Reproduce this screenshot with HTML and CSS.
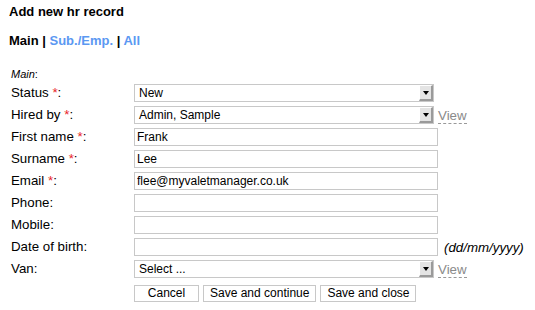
FILE: index.html
```html
<!DOCTYPE html>
<html lang="en">
<head>
<meta charset="UTF-8" />
<title>Add new hr record</title>
<link rel="stylesheet" href="styles.css">
</head>
<body>

<!-- Header -->
<h2 class="pageTitle">Add new hr record</h2>
<div class="tabs">
  <span class="tab current">Main</span> |
  <a class="tab" href="#">Sub./Emp.</a> |
  <a class="tab" href="#">All</a>
</div>

<!-- Form -->
<form class="hrForm" onsubmit="return false">
  <div class="section"><i>Main</i>:</div>

  <div class="row">
    <label class="label">Status <span class="req">*</span>:</label>
    <div class="select"><span class="selText">New</span><span class="arrow"></span></div>
  </div>
  <div class="row">
    <label class="label">Hired by <span class="req">*</span>:</label>
    <div class="select"><span class="selText">Admin, Sample</span><span class="arrow"></span></div>
    <a class="viewLink" href="#">View</a>
  </div>
  <div class="row">
    <label class="label">First name <span class="req">*</span>:</label>
    <input class="field" type="text" value="Frank" />
  </div>
  <div class="row">
    <label class="label">Surname <span class="req">*</span>:</label>
    <input class="field" type="text" value="Lee" />
  </div>
  <div class="row">
    <label class="label">Email <span class="req">*</span>:</label>
    <input class="field" type="text" value="flee@myvaletmanager.co.uk" />
  </div>
  <div class="row">
    <label class="label">Phone:</label>
    <input class="field" type="text" />
  </div>
  <div class="row">
    <label class="label">Mobile:</label>
    <input class="field" type="text" />
  </div>
  <div class="row">
    <label class="label">Date of birth:</label>
    <input class="field" type="text" />
    <span class="hint">(dd/mm/yyyy)</span>
  </div>
  <div class="row">
    <label class="label">Van:</label>
    <div class="select"><span class="selText">Select ...</span><span class="arrow"></span></div>
    <a class="viewLink" href="#">View</a>
  </div>

  <div class="buttons">
    <button class="btn">Cancel</button>
    <button class="btn">Save and continue</button>
    <button class="btn">Save and close</button>
  </div>
</form>

</body>
</html>
```

FILE: styles.css
```css
body {
  font-family: "Liberation Sans", Arial, sans-serif;
  font-size: 13px;
  color: #000;
  margin: 0;
  padding: 4px 9px;
  background: #fff;
}

/* Header */
.pageTitle {
  margin: 0;
  font-size: 13px;
  line-height: 16px;
  font-weight: bold;
}
.tabs {
  margin-top: 13px;
  font-weight: bold;
  line-height: 16px;
}
.tabs a.tab {
  color: #5b98f2;
  text-decoration: none;
}

/* Form */
.hrForm {
  margin: 18px 0 0 2px;
}
.section {
  font-size: 11px;
  line-height: 14px;
  margin-bottom: 3px;
}
.row {
  display: flex;
  align-items: center;
  height: 18px;
  margin-bottom: 4px;
}
.label {
  width: 123px;
  line-height: 18px;
  flex: none;
  font-size: 13.3px;
}
.req {
  color: #e8262a;
}
.field {
  box-sizing: border-box;
  width: 304px;
  height: 18px;
  margin: 0;
  padding: 0 2px;
  border: 1px solid #c8c8c8;
  font-family: "Liberation Sans", Arial, sans-serif;
  font-size: 12px;
  color: #000;
  outline: none;
}
.select {
  box-sizing: border-box;
  width: 300px;
  height: 18px;
  border: 1px solid #c8c8c8;
  display: flex;
  align-items: stretch;
  font-size: 12px;
  background: #fff;
}
.selText {
  flex: 1;
  padding-left: 4px;
  line-height: 16px;
}
.arrow {
  box-sizing: border-box;
  width: 14px;
  background: #e4e4e4;
  border-top: 1px solid #fff;
  border-left: 1px solid #fff;
  border-right: 2px solid #9a9a9a;
  border-bottom: 2px solid #9a9a9a;
  display: flex;
  align-items: center;
  justify-content: center;
}
.arrow::after {
  content: "";
  border-left: 3px solid transparent;
  border-right: 3px solid transparent;
  border-top: 4px solid #000;
}
.viewLink {
  margin-left: 4px;
  color: #8a8a8a;
  text-decoration: none;
  border-bottom: 1px dashed #999;
  line-height: 14px;
  margin-top: 3px;
  font-size: 13.3px;
}
.hint {
  margin-left: 6px;
  font-style: italic;
  font-size: 13.3px;
}

/* Buttons */
.buttons {
  display: flex;
  gap: 4px;
  padding-left: 123px;
  margin-top: 7px;
}
.btn {
  box-sizing: border-box;
  height: 17px;
  min-width: 65px;
  padding: 0 6px;
  background: #fff;
  border: 1px solid #c8c8c8;
  font-family: "Liberation Sans", Arial, sans-serif;
  font-size: 12px;
  line-height: 15px;
  color: #000;
  cursor: pointer;
}
```
